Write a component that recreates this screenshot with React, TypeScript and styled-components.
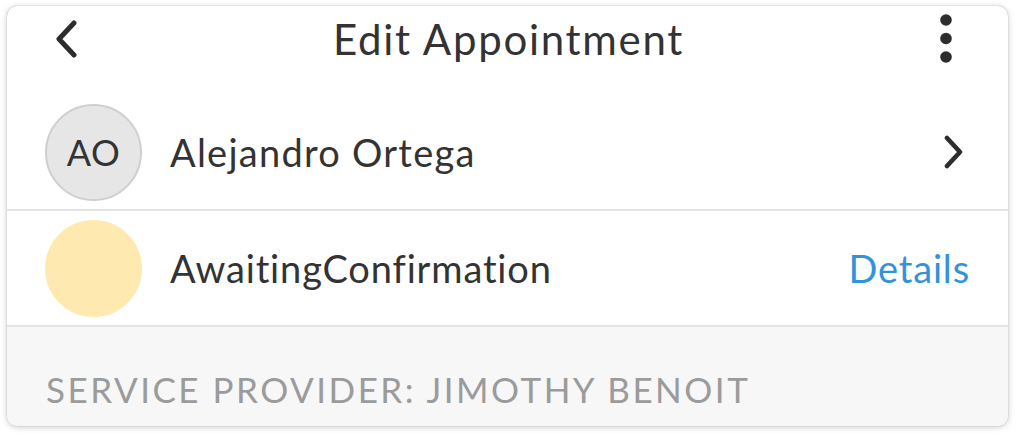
import React from "react";
import styled, { createGlobalStyle } from "styled-components";

const Global = createGlobalStyle`
  html, body { margin: 0; padding: 0; background: #ffffff; }
  body { font-family: Lato, "Open Sans", sans-serif; }
`;

const Page = styled.div`
  padding: 6px 8px 11px 7px;
  box-sizing: border-box;
  width: 1016px;
  height: 437px;
`;

const Card = styled.div`
  height: 420px;
  border-radius: 10px;
  background: #ffffff;
  box-shadow: 0 0 1px rgba(0,0,0,0.35), 0 1px 6px rgba(0,0,0,0.22);
  overflow: hidden;
  display: flex;
  flex-direction: column;
`;

const Header = styled.div`
  height: 89px;
  flex: none;
  display: grid;
  grid-template-columns: 100px 1fr 100px;
  align-items: start;
  padding-top: 5px;
  box-sizing: border-box;
`;

const IconSlot = styled.div<{ $align: "start" | "end" }>`
  display: flex;
  justify-content: ${(p) => (p.$align === "start" ? "flex-start" : "flex-end")};
  padding: ${(p) => (p.$align === "start" ? "0 0 0 47px" : "0 56px 0 0")};
  height: 56px;
  align-items: center;
`;

const Title = styled.div`
  text-align: center;
  font-size: 42px;
  color: #333333;
  line-height: 56px;
  letter-spacing: 1.7px;
  padding-left: 2px;
`;

const Row = styled.div`
  height: 114px;
  flex: none;
  border-bottom: 2px solid #e4e4e4;
  display: flex;
  align-items: center;
  padding: 0 38px;
  gap: 28px;
`;

const Avatar = styled.div<{ $bg: string; $border: string }>`
  width: 97px;
  height: 97px;
  border-radius: 50%;
  box-sizing: border-box;
  background: ${(p) => p.$bg};
  border: 2px solid ${(p) => p.$border};
  display: flex;
  align-items: center;
  justify-content: center;
  font-size: 36px;
  letter-spacing: 0.5px;
  color: #333333;
  flex: none;
`;

const Label = styled.div<{ $spacing: number }>`
  flex: 1;
  font-size: 38px;
  color: #333333;
  letter-spacing: ${(p) => p.$spacing}px;
`;

const LinkText = styled.div`
  font-size: 38px;
  color: #3392dc;
  letter-spacing: 0.85px;
`;

const Footer = styled.div`
  flex: 1;
  background: #f7f7f7;
  display: flex;
  align-items: flex-end;
  padding: 0 39px 16px;
  font-size: 35px;
  color: #9b9b9b;
  letter-spacing: 2.5px;
`;

const Back = () => (
  <svg width="24" height="38" viewBox="0 0 24 38">
    <path d="M20 3 L5 19 L20 35" fill="none" stroke="#2d2d2d" strokeWidth="5" strokeLinecap="round" strokeLinejoin="round" />
  </svg>
);

const Dots = () => (
  <svg width="12" height="50" viewBox="0 0 12 50">
    <circle cx="6" cy="6" r="5.8" fill="#2d2d2d" />
    <circle cx="6" cy="24.5" r="5.8" fill="#2d2d2d" />
    <circle cx="6" cy="43" r="5.8" fill="#2d2d2d" />
  </svg>
);

const Chevron = styled.svg`
  flex: none;
  margin-right: 7px;
`;

export default function App() {
  return (
    <>
      <Global />
      <Page>
        <Card>
          <Header>
            <IconSlot $align="start"><Back /></IconSlot>
            <Title>Edit Appointment</Title>
            <IconSlot $align="end"><Dots /></IconSlot>
          </Header>
          <Row>
            <Avatar $bg="#e6e6e6" $border="#cfcfcf">AO</Avatar>
            <Label $spacing={1.25}>Alejandro Ortega</Label>
            <Chevron width="19" height="34" viewBox="0 0 19 34">
              <path d="M3 3 L16 17 L3 31" fill="none" stroke="#2d2d2d" strokeWidth="4.6" strokeLinecap="round" strokeLinejoin="round" />
            </Chevron>
          </Row>
          <Row>
            <Avatar $bg="#fee9b0" $border="#fee9b0" />
            <Label $spacing={0.85}>AwaitingConfirmation</Label>
            <LinkText>Details</LinkText>
          </Row>
          <Footer>SERVICE PROVIDER: JIMOTHY BENOIT</Footer>
        </Card>
      </Page>
    </>
  );
}
